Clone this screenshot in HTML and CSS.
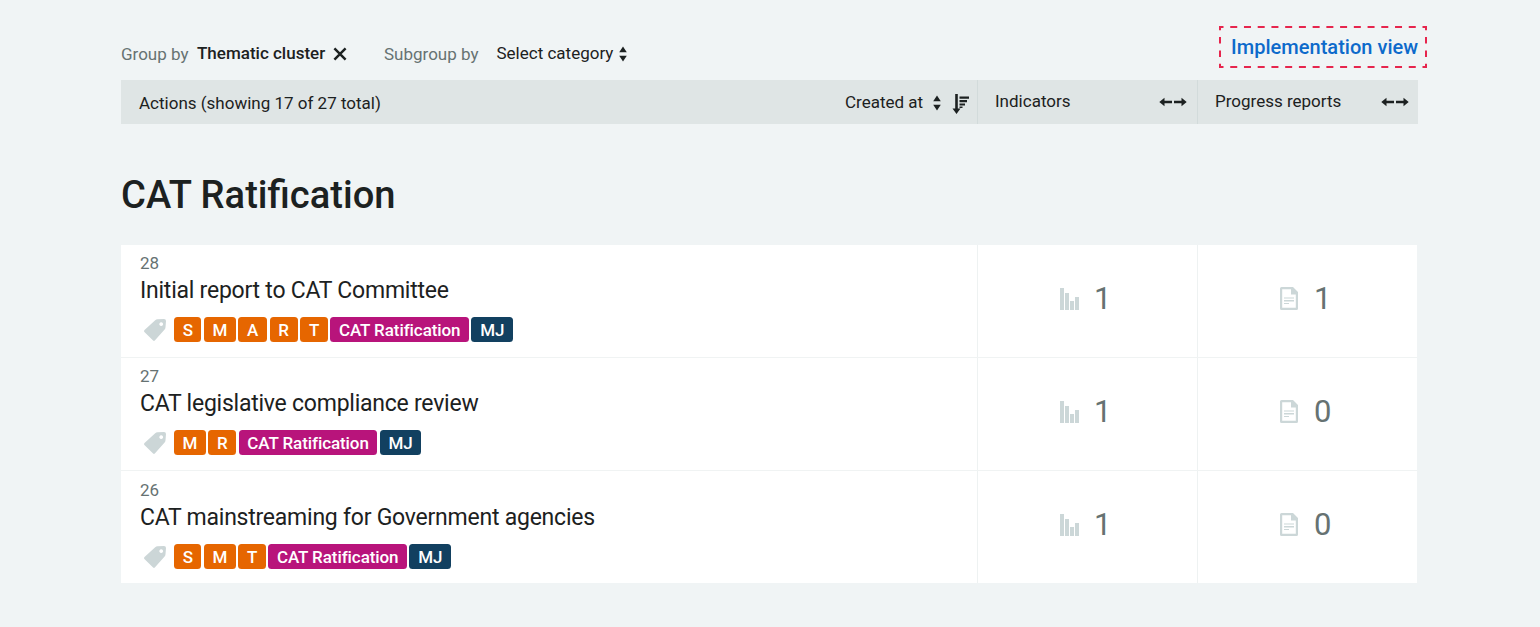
FILE: index.html
```html
<!DOCTYPE html>
<html lang="en">
<head>
<meta charset="utf-8">
<title>Actions</title>
<link rel="stylesheet" href="styles.css">
</head>
<body>
<svg class="defs" width="0" height="0" aria-hidden="true">
  <symbol id="sort" viewBox="0 0 8 16"><path d="M4 0.5 7.8 6.3H.2zM4 15.5 7.8 9.7H.2z"/></symbol>
  <symbol id="arrows" viewBox="0 0 28 10"><path d="M.3 5 5.500 .8v2.900H13v2.600H5.500V9.200zM27.700 5 22.500 .8v2.900H15v2.600h7.500V9.200z"/></symbol>
  <symbol id="tag" viewBox="0 0 24 24"><path fill-rule="evenodd" d="M12.200 2.300Q13.200 1.400 14.500 1.300L21 1Q23 1 23 3L22.500 9.300Q22.400 10.800 21.400 11.800L11.800 22.500Q11 23.400 10.100 22.500L1.400 14Q.5 13 1.500 12.100zM18.200 4.200a1.900 1.900 0 1 0 .01 0z"/></symbol>
  <symbol id="bars" viewBox="0 0 20 22"><path d="M0 0h4v22H0zM5 5h4v17H5zM10 13h4v9h-4zM15 9h4v13h-4z"/></symbol>
  <symbol id="doc" viewBox="0 0 18 23"><path fill-rule="evenodd" d="M1.500 0H13l5 5v16.500q0 1.500-1.500 1.500h-15Q0 23 0 21.500v-20Q0 0 1.500 0zM2.200 2.200v18.600h13.600V7.500H11V2.200z"/><path d="M4 10.500h10v1H4zM4 13h10v1.500H4zM4 16h5v1H4z"/></symbol>
</svg>
<main class="page">
  <div class="toolbar">
    <span class="label group-label">Group by</span>
    <strong class="group-value">Thematic cluster</strong>
    <svg class="close" viewBox="0 0 12 12"><path d="M1.200 1.200 10.800 10.800M10.800 1.200 1.200 10.800"/></svg>
    <span class="label subgroup-label">Subgroup by</span>
    <span class="subgroup-value">Select category</span>
    <svg class="sort"><use href="#sort"/></svg>
    <a class="view-link"><svg class="outline" viewBox="0 0 208 42"><path class="dash-h" d="M1 1H207M1 41H207"/><path class="dash-v" d="M1 1V41M207 1V41"/><path class="corners" d="M0 1H2M206 1H208M0 41H2M206 41H208"/></svg><span>Implementation view</span></a>
  </div>
  <div class="grid head">
    <div class="cell main-head"><span class="head-actions">Actions (showing 17 of 27 total)</span><span class="head-created">Created at</span><svg class="sort"><use href="#sort"/></svg><svg class="order" viewBox="0 0 17 20"><path d="M3.200 0h2.600v14.500H8.500L4.500 20 .5 14.500h2.700zM7.500 2.500H17v2.200H7.500zM7.500 6h7.500v2.200H7.500zM7.500 9.500H13v2.100H7.500zM7.500 12.500h3v1.500h-3z"/></svg></div>
    <div class="cell side-head wide"><span>Indicators</span><svg class="arrows"><use href="#arrows"/></svg></div>
    <div class="cell side-head"><span>Progress reports</span><svg class="arrows"><use href="#arrows"/></svg></div>
  </div>
  <h1 class="title">CAT Ratification</h1>
  <section class="rows">
    <article class="grid row">
      <div class="cell action"><div class="num">28</div><div class="name">Initial report to CAT Committee</div>
        <div class="tags"><svg class="tag-icon"><use href="#tag"/></svg><span class="tag s">S</span><span class="tag m">M</span><span class="tag a">A</span><span class="tag r">R</span><span class="tag t">T</span><span class="tag cat">CAT Ratification</span><span class="tag mj">MJ</span></div></div>
      <div class="cell count"><svg class="bars"><use href="#bars"/></svg><span>1</span></div>
      <div class="cell count"><svg class="doc"><use href="#doc"/></svg><span>1</span></div>
    </article>
    <article class="grid row">
      <div class="cell action"><div class="num">27</div><div class="name">CAT legislative compliance review</div>
        <div class="tags"><svg class="tag-icon"><use href="#tag"/></svg><span class="tag m">M</span><span class="tag r">R</span><span class="tag cat">CAT Ratification</span><span class="tag mj">MJ</span></div></div>
      <div class="cell count"><svg class="bars"><use href="#bars"/></svg><span>1</span></div>
      <div class="cell count"><svg class="doc"><use href="#doc"/></svg><span>0</span></div>
    </article>
    <article class="grid row">
      <div class="cell action"><div class="num">26</div><div class="name">CAT mainstreaming for Government agencies</div>
        <div class="tags"><svg class="tag-icon"><use href="#tag"/></svg><span class="tag s">S</span><span class="tag m">M</span><span class="tag t">T</span><span class="tag cat">CAT Ratification</span><span class="tag mj">MJ</span></div></div>
      <div class="cell count"><svg class="bars"><use href="#bars"/></svg><span>1</span></div>
      <div class="cell count"><svg class="doc"><use href="#doc"/></svg><span>0</span></div>
    </article>
  </section>
</main>
</body>
</html>
```
FILE: styles.css
```css
* { box-sizing: border-box; }
body { margin: 0; background: #f0f4f5; color: #1c2121; font-family: Roboto, sans-serif; font-size: 17px; line-height: 20px; }
.defs { display: block; height: 0; }
svg { flex: none; fill: currentColor; }
.page { width: 1297px; margin-left: 121px; white-space: nowrap; }
.toolbar { display: flex; height: 80px; padding-top: 43px; align-items: flex-start; }
.label { color: #667272; padding-top: 1px; }
.group-label { width: 76px; }
.group-value { width: 136px; font-weight: 500; }
.close { width: 14px; height: 14px; margin-top: 4px; fill: none; stroke: currentColor; stroke-width: 2.1; }
.subgroup-label { width: 112.500px; margin-left: 37px; }
.subgroup-value { width: 122.500px; }
.sort { width: 8px; height: 16px; margin-top: 3px; }
.view-link { position: relative; display: flex; width: 208px; height: 42px; margin: -17px -9px 0 auto; padding: 9px 0 0 12px; color: #0d6acb; font-size: 20px; line-height: 24px; font-weight: 500; letter-spacing: 0.03px; }
.outline { position: absolute; inset: 0; width: 208px; height: 42px; fill: none; stroke: #e6254d; stroke-width: 2; }
.dash-h { stroke-dasharray: 7 6.733; stroke-dashoffset: 3.500; }
.dash-v { stroke-dasharray: 6.500 6.833; stroke-dashoffset: 3.250; }
.grid { display: grid; grid-template-columns: 856px 220px 221px; }
.head { height: 44px; background: #dfe5e5; }
.cell + .cell { border-left: 1px solid #d2dbdb; }
.main-head { display: flex; align-items: flex-start; padding: 12px 8px 0 18px; }
.head-actions { padding-top: 1px; }
.head-created { margin-left: auto; width: 88px; }
.order { width: 17px; height: 20px; margin: 2px 0 0 11px; }
.side-head { display: flex; justify-content: space-between; padding: 11px 9px 0 17px; }
.wide { padding-right: 10px; }
.arrows { width: 28px; height: 10px; margin-top: 6px; }
.title { margin: 48px 0 0; height: 73px; font-size: 38.120px; line-height: 46px; font-weight: 500; }
.rows { background: #fff; width: 1296px; }
.row { height: 113px; border-bottom: 1px solid #f0f3f3; }
.row:last-child { height: 112px; border-bottom: 0; }
.row .cell + .cell { border-left-color: #eef2f2; }
.action { padding: 8px 19px 0; }
.row:last-child .action { padding-top: 9px; }
.num { color: #667272; height: 20px; }
.name { height: 44px; font-size: 23px; line-height: 36px; letter-spacing: -0.235px; }
.tags { display: flex; gap: 2.500px; }
.tag-icon { width: 24px; height: 24px; margin: 1px 4.600px 0 3px; color: #ccd6d7; }
.tag { height: 25px; border-radius: 3.500px; background: #e66600; color: #fff; text-align: center; font-size: 17px; letter-spacing: -0.080px; line-height: 26px; font-weight: 500; }
.s { width: 27.400px; }
.m { width: 31.700px; }
.a { width: 29px; }
.r { width: 28px; }
.t { width: 27.800px; }
.cat { width: 138.500px; background: #b8147b; }
.mj { width: 41.700px; background: #124060; }
.count { display: flex; padding: 36px 0 0 81px; color: #667272; font-size: 31px; line-height: 36px; }
.bars, .doc { color: #ccd7d8; }
.bars { width: 20px; height: 22px; margin: 7px 14px 0 1px; }
.doc { width: 18px; height: 23px; margin: 6px 16px 0 1px; }
```
